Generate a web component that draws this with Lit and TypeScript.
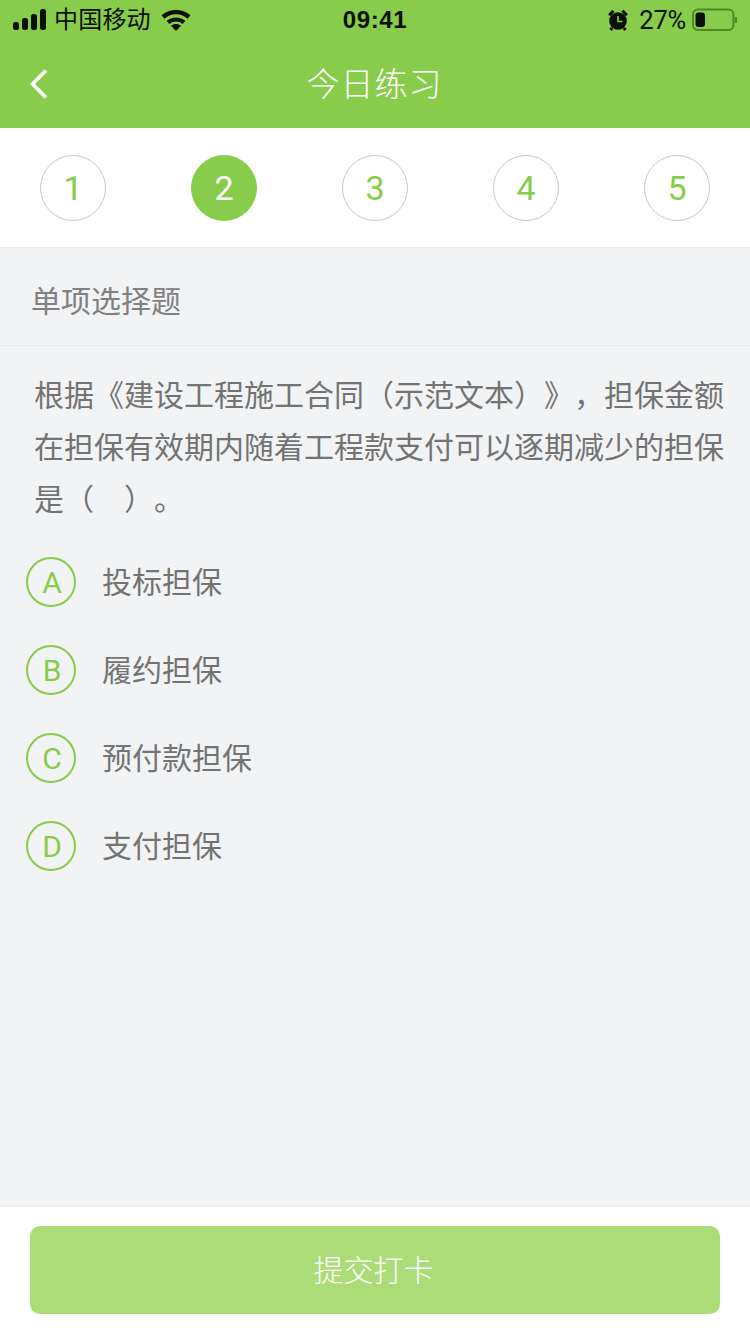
import { LitElement, html, css } from "lit";
import { customElement } from "lit/decorators.js";

const STEPS = ["1", "2", "3", "4", "5"];
const OPTIONS = [
  ["A", "投标担保"],
  ["B", "履约担保"],
  ["C", "预付款担保"],
  ["D", "支付担保"],
];

@customElement("app-root")
export class AppRoot extends LitElement {
  static styles = css`
    :host {
      display: flex;
      flex-direction: column;
      width: 750px;
      height: 1334px;
      overflow: hidden;
      background: #f2f3f5;
      font-family: "Liberation Sans", "Noto Sans CJK SC", sans-serif;
      color: #666;
      text-spacing-trim: space-all;
    }
    .top { background: #87cc4a; height: 128px; display: flex; flex-direction: column; flex: none; }
    .status {
      height: 40px;
      display: grid;
      grid-template-columns: 1fr auto 1fr;
      align-items: center;
      color: #0b0f06;
      font-size: 24px;
    }
    .left { display: flex; align-items: center; padding-left: 13px; }
    .carrier { margin-left: 7px; line-height: 40px; letter-spacing: 0.2px; }
    .wifi { margin-left: 10px; }
    .time { font-size: 24px; font-weight: 700; letter-spacing: 0.6px; }
    .right { display: flex; align-items: center; justify-content: flex-end; padding-right: 13px; }
    .pct { margin-left: 11px; font-family: Roboto, sans-serif; font-weight: 400; font-size: 25.5px; letter-spacing: -0.2px; }
    .batt { margin-left: 6px; }
    .nav {
      flex: 1;
      display: grid;
      grid-template-columns: 1fr auto 1fr;
      align-items: center;
    }
    .back { padding-left: 29px; display: flex; }
    .title { color: #fff; font-size: 33px; font-weight: 300; letter-spacing: 1px; padding: 0 1px 4px 0; }
    .steps {
      flex: none;
      height: 119px;
      background: #fff;
      border-bottom: 1px solid #e8e9eb;
      display: flex;
      justify-content: space-between;
      align-items: center;
      padding: 0 40px;
    }
    .step {
      width: 66px;
      height: 66px;
      box-sizing: border-box;
      border: 1px solid #c9c9c9;
      border-radius: 50%;
      display: flex;
      align-items: center;
      justify-content: center;
      color: #87cc4a;
      font-family: Roboto, sans-serif;
      font-weight: 400;
      font-size: 34px;
    }
    .step.on { background: #87cc4a; border-color: #87cc4a; color: #fff; }
    .label {
      flex: none;
      height: 98px;
      box-sizing: border-box;
      border-bottom: 1px solid #e9eaec;
      display: flex;
      align-items: center;
      padding: 4px 0 0 31px;
      font-size: 30px;
      font-weight: 400;
      color: #808080;
    }
    .q {
      padding: 24px 26px 0 34px;
      font-size: 30px;
      line-height: 52px;
      font-weight: 400;
      color: #737373;
      width: 690px;
    }
    .opts { padding: 31px 0 0 26px; display: flex; flex-direction: column; gap: 38px; flex: 1; }
    .opt { display: flex; align-items: center; height: 50px; }
    .badge {
      width: 50px;
      height: 50px;
      box-sizing: border-box;
      border: 2px solid #87cc4a;
      border-radius: 50%;
      color: #87cc4a;
      font-family: Roboto, sans-serif;
      font-size: 30px;
      font-weight: 400;
      display: flex;
      align-items: center;
      justify-content: center;
      padding-left: 2px;
    }
    .opt-text { margin-left: 26px; font-size: 30px; font-weight: 400; color: #737373; padding-bottom: 4px; }
    .foot {
      flex: none;
      height: 128px;
      box-sizing: border-box;
      background: #fff;
      border-top: 1px solid #e8e9eb;
      padding: 19px 30px 0;
    }
    .btn {
      height: 88px;
      box-sizing: border-box;
      border-radius: 10px;
      background: #abdc78;
      color: #fff;
      font-size: 30px;
      font-weight: 300;
      display: flex;
      align-items: center;
      justify-content: center;
      padding: 0 3px 4px 0;
    }
  `;

  render() {
    return html`
      <div class="top">
        <div class="status">
          <div class="left">
            <svg width="34" height="22" viewBox="0 0 34 22" fill="#0b0f06">
              <rect x="0" y="13" width="6" height="8" rx="2.500" />
              <rect x="9" y="9" width="6" height="12" rx="2.500" />
              <rect x="18" y="5" width="6" height="16" rx="2.500" />
              <rect x="27" y="0" width="6" height="21" rx="2.500" />
            </svg>
            <span class="carrier">中国移动</span>
            <svg class="wifi" width="30" height="22" viewBox="0 0 30 22" fill="none" stroke="#0b0f06">
              <path d="M2 8C9.500 1.500 20.500 1.500 28 8" stroke-width="4.400" />
              <path d="M7 13.500C11.500 9.500 18.500 9.500 23 13.500" stroke-width="4.200" />
              <path d="M10 16.800L15 22L20 16.800C17 14.500 13 14.500 10 16.800Z" fill="#0b0f06" stroke="none" />
            </svg>
          </div>
          <div class="time">09:41</div>
          <div class="right">
            <svg width="20" height="22" viewBox="0 0 20 22">
              <circle cx="10" cy="12" r="8.800" fill="#0b0f06" />
              <path d="M10 7V12.500H14.500" fill="none" stroke="#87cc4a" stroke-width="1.600" />
              <path d="M1.200 6.200L5.500 1.800M18.800 6.200L14.500 1.800M4 19L2.500 21M16 19L17.500 21" stroke="#0b0f06" stroke-width="3" fill="none" />
            </svg>
            <span class="pct">27%</span>
            <svg class="batt" width="45" height="24" viewBox="0 0 45 24">
              <rect x="1" y="1.500" width="40.500" height="20.500" rx="5" fill="none" stroke="#4c8a28" stroke-width="2" />
              <rect x="3.500" y="4.500" width="9.500" height="14.500" rx="3" fill="#0b0f06" />
              <path d="M44 9V15" fill="none" stroke="#4c8a28" stroke-width="2" />
            </svg>
          </div>
        </div>
        <div class="nav">
          <div class="back">
            <svg width="20" height="32" viewBox="0 0 20 32" fill="none" stroke="#fff" stroke-width="3.600">
              <path d="M17 2.500L3.500 16L17 29.500" />
            </svg>
          </div>
          <div class="title">今日练习</div>
          <div></div>
        </div>
      </div>
      <div class="steps">
        ${STEPS.map((s, i) => html`<div class="step ${i === 1 ? "on" : ""}">${s}</div>`)}
      </div>
      <div class="label">单项选择题</div>
      <div class="q">根据《建设工程施工合同（示范文本）》，担保金额在担保有效期内随着工程款支付可以逐期减少的担保是（　）。</div>
      <div class="opts">
        ${OPTIONS.map(
          ([k, t]) => html`<div class="opt"><div class="badge">${k}</div><div class="opt-text">${t}</div></div>`
        )}
      </div>
      <div class="foot"><div class="btn">提交打卡</div></div>
    `;
  }
}
